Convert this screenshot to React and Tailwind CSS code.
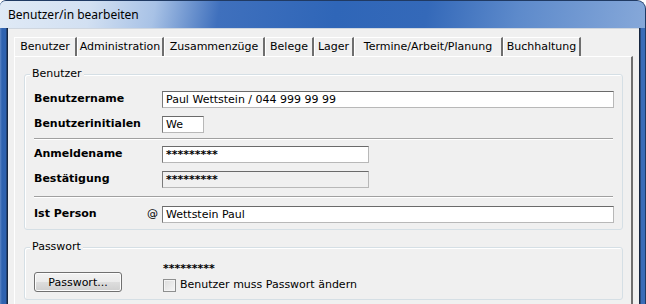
const font = { fontFamily: '"DejaVu Sans", Verdana, sans-serif' }

const tabs = [
    { label: "Benutzer", w: "w-[63px]", active: true },
    { label: "Administration", w: "w-[87px]" },
    { label: "Zusammenzüge", w: "w-[101px]" },
    { label: "Belege", w: "w-[49px]" },
    { label: "Lager", w: "w-[40px]" },
    { label: "Termine/Arbeit/Planung", w: "w-[149px]" },
    { label: "Buchhaltung", w: "w-[78px]" },
]

function Field({ value, className = "", disabled }) {
    return (
        <div
            className={`h-[17px] flex items-center pl-[3px] border border-[#b8b8b8] border-t-[#6a6a6a] border-l-[#7a7a7a] text-[11px] text-black leading-none ${disabled ? "bg-[#f0f0f0]" : "bg-white"} ${className}`}
        >
            {value}
        </div>
    )
}

function Row({ label, children, at }) {
    return (
        <div className="flex items-center h-[17px]">
            <div className="w-[113px] font-bold text-[11px] text-black">{label}</div>
            <div className="w-[15px] text-[11px] text-black">{at}</div>
            {children}
        </div>
    )
}

function Divider() {
    return <div className="h-[2px] border-t border-[#a0a0a0] border-b border-b-white w-[579px]" />
}

function Group({ title, className = "", children }) {
    return (
        <div className={`relative border border-[#d5dfe5] rounded-[3px] shadow-[inset_1px_1px_0_#fff] ${className}`}>
            <span className="absolute left-[5px] -top-[8px] px-[2px] bg-[#f0f0f0] text-[11px] leading-[14px] text-black">
                {title}
            </span>
            {children}
        </div>
    )
}

export default function App() {
    return (
        <div className="w-[646px] h-[304px] overflow-hidden bg-white select-none" style={font}>
            <div className="w-[646px] h-[304px] rounded-tr-[9px] rounded-tl-[6px] overflow-hidden border-t border-r border-[#203a63] bg-[linear-gradient(to_right,#2c5da6_0px,#3d6db4_8px,#2c5da6_100%)] flex flex-col">
                {/* Title bar */}
                <div className="h-[27px] shrink-0 flex items-center pl-[8px] bg-[linear-gradient(100deg,#e0eaf6_0%,#d2e0f2_14%,#a8c2e6_24%,#3f70bd_34%,#2f66b8_52%,#3469b9_66%,#5d8acb_80%,#86a8d9_100%)]">
                    <span className="text-[12px] text-black" style={{ fontFamily: '"Noto Sans", "Open Sans", sans-serif' }}>
                        Benutzer/in bearbeiten
                    </span>
                </div>

                <div className="flex flex-1 min-h-0">
                    {/* left frame */}
                    <div className="w-[8px] shrink-0 bg-[linear-gradient(to_right,#5c86c6_0px,#2f63b0_2px,#2f63b0_6px,#16263f_7px)]" />

                    {/* content */}
                    <div className="flex-1 bg-[#f0f0f0] border-t border-[#cfd6df] pt-[8px] pl-[6px] pr-[6px] flex flex-col">
                        {/* Tabs */}
                        <div className="flex h-[19px] shrink-0">
                            {tabs.map((t) => (
                                <div
                                    key={t.label}
                                    className={`${t.w} h-full flex items-center justify-center border-t border-l border-t-white border-l-white border-r-2 border-r-[#6e6e6e] text-[11px] text-black ${t.active ? "bg-[#f0f0f0]" : ""}`}
                                >
                                    {t.label}
                                </div>
                            ))}
                        </div>

                        {/* Panel */}
                        <div className="flex-1 border-t border-l border-white border-r-2 border-r-[#6e6e6e] pl-[9px] pr-[8px] pt-[17px]">
                            <Group title="Benutzer" className="pl-[9px] pr-[8px] pt-[16px] pb-[6px]">
                                <Row label="Benutzername">
                                    <Field value="Paul Wettstein / 044 999 99 99" className="w-[452px]" />
                                </Row>
                                <div className="mt-[8px]">
                                    <Row label="Benutzerinitialen">
                                        <Field value="We" className="w-[42px]" />
                                    </Row>
                                </div>
                                <div className="mt-[5px]">
                                    <Divider />
                                </div>
                                <div className="mt-[6px]">
                                    <Row label="Anmeldename">
                                        <Field value="*********" className="w-[207px] font-bold" />
                                    </Row>
                                </div>
                                <div className="mt-[8px]">
                                    <Row label="Bestätigung">
                                        <Field value="*********" disabled className="w-[207px] font-bold" />
                                    </Row>
                                </div>
                                <div className="mt-[8px]">
                                    <Divider />
                                </div>
                                <div className="mt-[8px]">
                                    <Row label="Ist Person" at="@">
                                        <Field value="Wettstein Paul" className="w-[452px]" />
                                    </Row>
                                </div>
                            </Group>

                            <Group title="Passwort" className="mt-[17px] pl-[9px] pt-[13px] pb-[6px]">
                                <div className="flex">
                                    <button className="mt-[11px] w-[88px] h-[20px] rounded-[3px] border border-[#707070] bg-[linear-gradient(to_bottom,#f2f2f2_0%,#ebebeb_50%,#dddddd_51%,#cfcfcf_100%)] shadow-[inset_0_0_0_1px_#fcfcfc] text-[11px] text-black leading-none">
                                        Passwort...
                                    </button>
                                    <div className="ml-[41px] flex flex-col">
                                        <div className="h-[12px] pt-[2px] text-[11px] font-bold leading-[12px] text-black">*********</div>
                                        <div className="mt-[4px] h-[16px] flex items-center">
                                            <div className="w-[13px] h-[13px] border border-[#8e8f8f] bg-[linear-gradient(135deg,#dcdcdc,#f6f6f6)] shadow-[inset_0_0_0_1px_#f4f4f4]" />
                                            <span className="ml-[4px] text-[11px] text-black">Benutzer muss Passwort ändern</span>
                                        </div>
                                    </div>
                                </div>
                            </Group>
                        </div>
                    </div>

                    {/* right frame */}
                    <div className="w-[8px] shrink-0 bg-[linear-gradient(to_right,#16263f_0px,#16263f_1px,#3a6cb8_2px,#3a6cb8_6px,#1c3560_7px)]" />
                </div>
            </div>
        </div>
    )
}
